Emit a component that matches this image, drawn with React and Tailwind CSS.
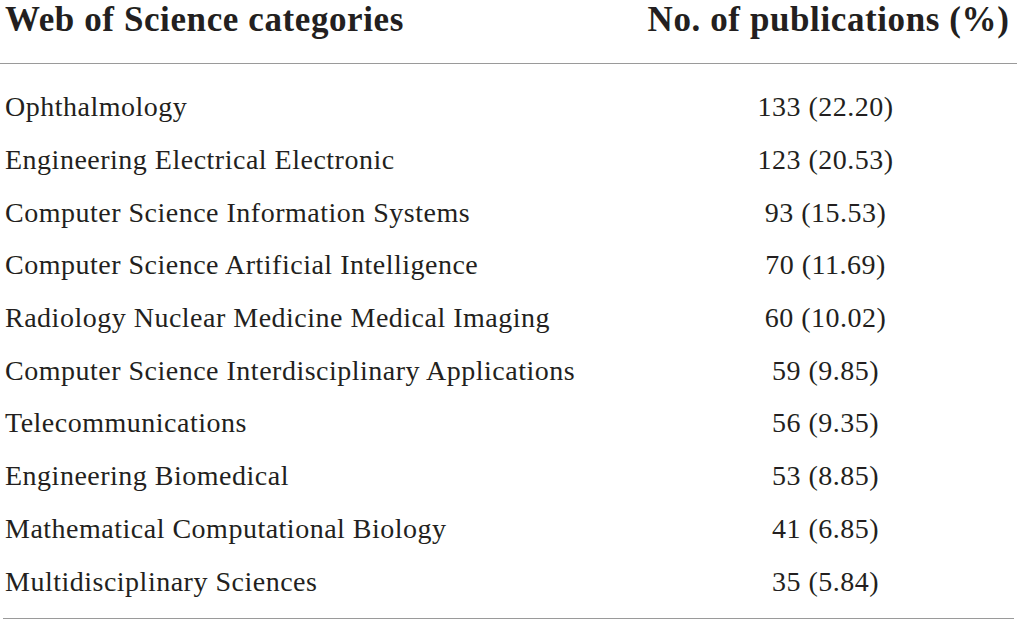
const rows = [
  ['Ophthalmology', '133 (22.20)'],
  ['Engineering Electrical Electronic', '123 (20.53)'],
  ['Computer Science Information Systems', '93 (15.53)'],
  ['Computer Science Artificial Intelligence', '70 (11.69)'],
  ['Radiology Nuclear Medicine Medical Imaging', '60 (10.02)'],
  ['Computer Science Interdisciplinary Applications', '59 (9.85)'],
  ['Telecommunications', '56 (9.35)'],
  ['Engineering Biomedical', '53 (8.85)'],
  ['Mathematical Computational Biology', '41 (6.85)'],
  ['Multidisciplinary Sciences', '35 (5.84)'],
];

export default function App() {
  return (
    <div className="w-[1017px] h-[627px] bg-white text-[#231f20] font-['Liberation_Serif',serif]">
      <div className="flex items-start h-[64px] border-b border-[#9a9a9a]">
        <div className="w-[640px] pl-[5px] text-[35px] leading-[40px] tracking-[0.6px] font-bold">Web of Science categories</div>
        <div className="flex-1 text-center text-[35px] leading-[40px] tracking-[0.6px] font-bold">No. of publications (%)</div>
      </div>
      <div className="pt-[17px] pb-[10px] mx-[3px] border-b border-[#9a9a9a]">
        {rows.map(([name, val], i) => (
          <div key={i} className="flex items-center h-[52.7px] text-[28px] tracking-[0.5px]">
            <div className="w-[637px] pl-[2px]">{name}</div>
            <div className="flex-1 text-center pr-[3px]">{val}</div>
          </div>
        ))}
      </div>
    </div>
  );
}
